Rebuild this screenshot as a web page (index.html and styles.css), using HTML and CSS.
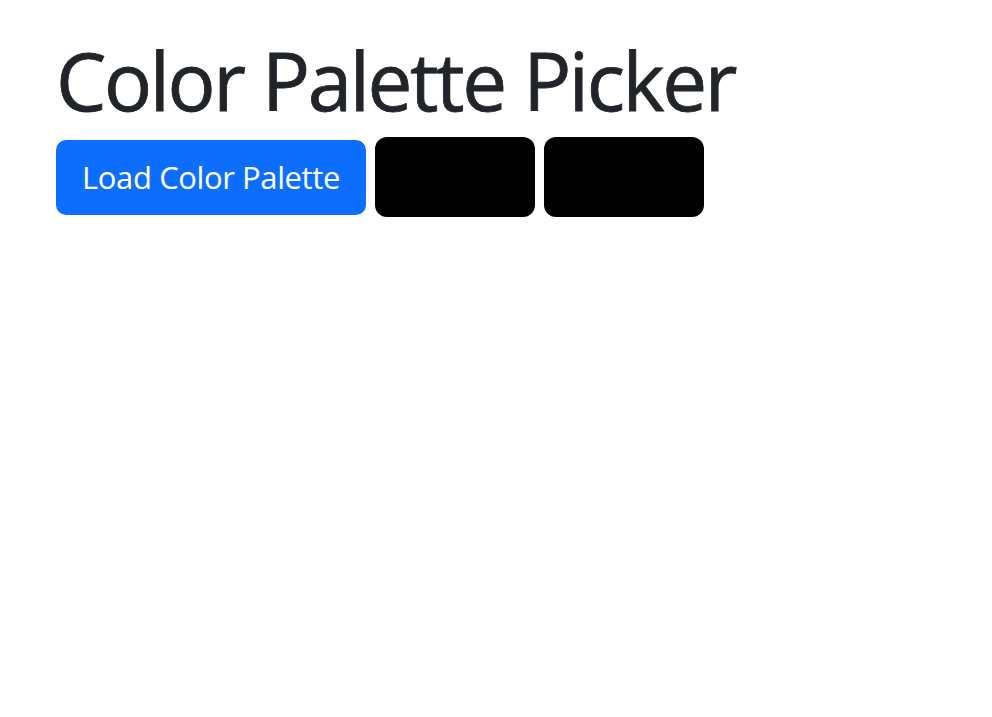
FILE: index.html
```html
<!DOCTYPE html>
<html>
<head>
    <meta name="viewport" content="width=device-width, initial-scale=1">
    <link rel="stylesheet" href="styles.css">
</head>
<body>

<div class="container">
    <h1 class="title">Color Palette Picker</h1>
    <div class="palette">
        <button type="button" class="btn-load">Load Color Palette</button>
        <div class="swatch"></div>
        <div class="swatch"></div>
    </div>
</div>

</body>
</html>
```

FILE: styles.css
```css
body {
  margin: 0;
  font-family: "Open Sans", "Noto Sans", Arial, sans-serif;
  color: #212529;
  background: #fff;
}
* {
  box-sizing: border-box;
}
.container {
  padding: 32px 56px;
}

.title {
  margin: 0 0 9px 0;
  font-size: 80px;
  font-weight: 500;
  letter-spacing: -2.4px;
  line-height: 1.2;
  color: #212529;
  -webkit-text-stroke: 0.8px #212529;
}

.palette {
  display: flex;
  align-items: center;
  gap: 9px;
}

.btn-load {
  width: 310px;
  height: 75px;
  padding: 0;
  border: none;
  border-radius: 10px;
  background-color: #0d6efd;
  color: #fff;
  font-family: inherit;
  font-size: 31px;
  letter-spacing: -0.4px;
  white-space: nowrap;
  cursor: pointer;
}

.swatch {
  width: 160px;
  height: 80px;
  border-radius: 12px;
  background-color: #000;
}
```
